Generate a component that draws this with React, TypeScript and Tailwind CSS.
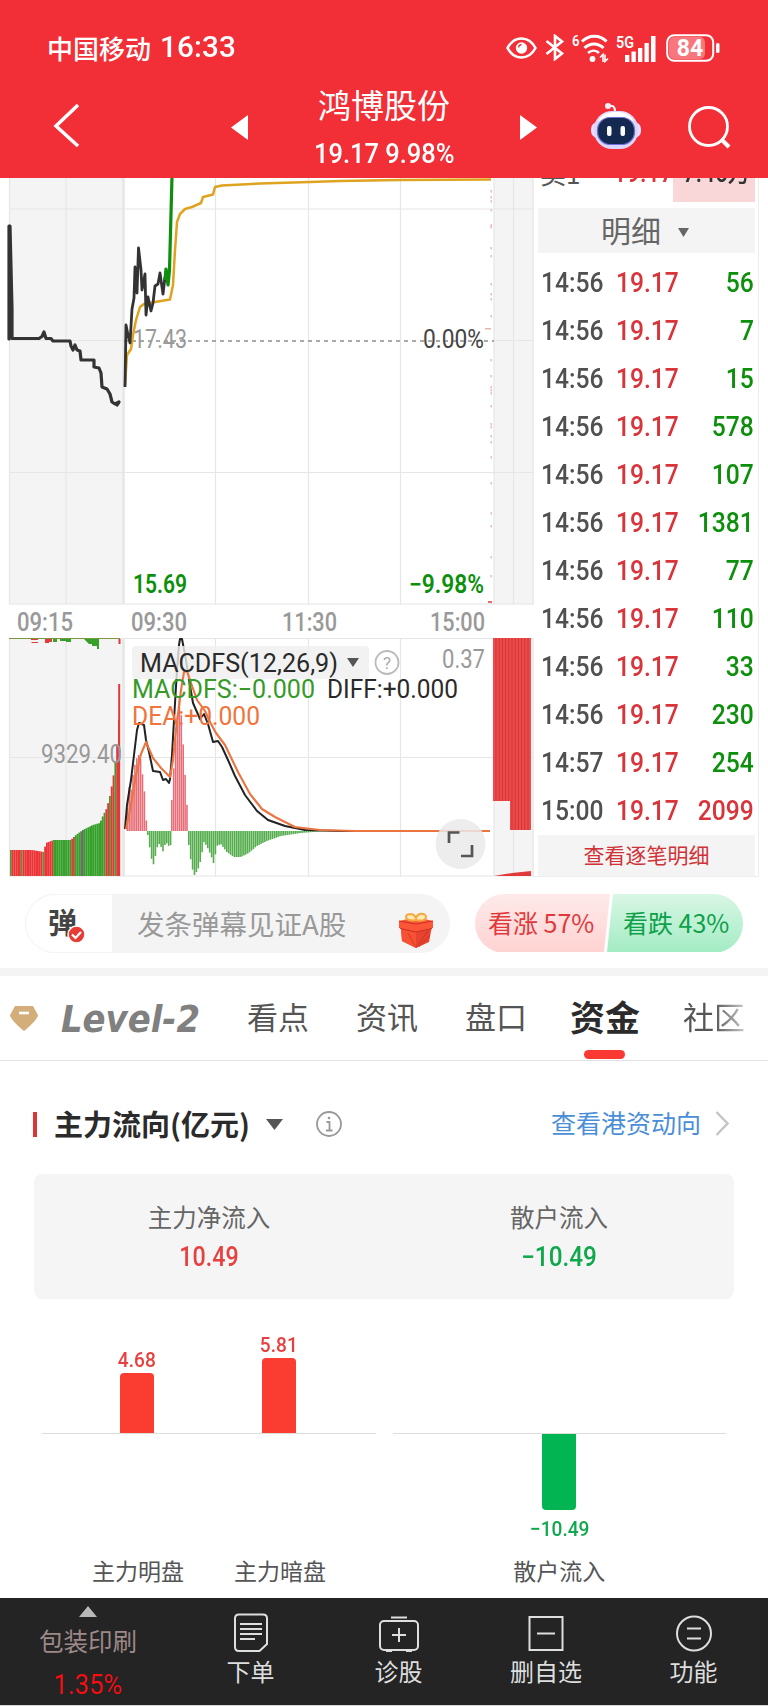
import type { ReactNode } from "react";

const FONT = "font-['Roboto','Noto_Sans_CJK_SC',sans-serif]";
const CJK = "font-['Noto_Sans_CJK_SC',sans-serif]";

type Pt = [number, number];
const line = (pts: Pt[]) => pts.map((p) => p.join(",")).join(" ");

function at(pts: Pt[], x: number) {
  for (let i = 1; i < pts.length; i++) {
    if (x <= pts[i][0]) {
      const [x0, y0] = pts[i - 1];
      const [x1, y1] = pts[i];
      return y0 + ((y1 - y0) * (x - x0)) / (x1 - x0);
    }
  }
  return pts[pts.length - 1][1];
}

function range(a: number, b: number, step: number) {
  const out: number[] = [];
  for (let v = a; v <= b; v += step) out.push(v);
  return out;
}

const auction: Pt[] = [[9, 226], [9, 339], [10, 226], [12, 309], [12, 338.5], [39, 338.5], [42, 336.5], [44, 332], [46, 338.5], [51, 338.5], [53, 341], [70, 341], [71, 346], [73, 350], [75, 345], [77, 350], [80, 351], [81, 360], [94, 360], [94, 367], [99, 368], [101, 373], [102, 387], [107, 389], [110, 394], [112, 402], [115, 404], [119, 402], [117, 405]];
const price: Pt[] = [[125, 387], [126, 325], [128, 335], [130, 343], [132, 309], [134, 298], [135, 267], [137, 293], [138.5, 248], [141, 270], [142, 290], [145, 274], [146, 315], [148, 297], [151, 311], [153, 303], [155, 286], [158, 284], [160, 273], [163, 294], [165, 277]];
const surge: Pt[] = [[165, 280], [166, 269], [168, 285], [169.5, 270], [172, 176]];
const avg: Pt[] = [[125, 385], [127, 355], [131, 349], [133, 335], [136, 320], [140, 307], [144, 304], [155, 302], [170, 299.5], [173, 285], [175, 250], [177, 222], [180, 214], [185, 209], [192, 207], [201, 203], [203, 197], [213, 194.5], [215, 187], [222, 185.5], [260, 183.5], [310, 182], [340, 181], [400, 180], [491, 179.5]];
const diff: Pt[] = [[125, 829], [127, 805], [131, 780], [134, 755], [137, 730], [139, 723], [144, 725], [146, 740], [149, 752], [153, 771], [160, 772], [163, 780], [166, 779], [169, 783], [170, 779], [172, 755], [174, 720], [177, 670], [179, 645], [180, 639], [182, 639], [186, 660], [189, 680], [193, 703], [200, 719], [204, 714], [208, 724], [213, 742], [218, 741], [222, 747], [228, 760], [235, 776], [245, 795], [257, 811], [268, 820], [285, 826], [305, 830], [340, 831], [490, 831]];
const dea: Pt[] = [[126, 829], [131, 805], [136, 775], [141, 754], [146, 742], [153, 758], [161, 768], [167, 774], [170, 777], [173, 760], [176, 730], [181, 690], [184, 672], [187, 671], [191, 683], [197, 700], [205, 711], [210, 722], [216, 733], [225, 745], [238, 772], [250, 794], [262, 809], [275, 817], [295, 827], [320, 830], [355, 831], [490, 831]];
const macdUp1: Pt[] = [[126, 815], [128, 786], [130, 792], [132, 776], [135, 760], [139, 753], [141, 768], [144, 795], [146, 829]];
const macdUp2: Pt[] = [[171, 800], [174, 750], [177, 712], [179, 695], [181, 722], [184, 770], [186, 802], [188, 830]];
const macdDown1: Pt[] = [[147, 835], [149, 848], [151, 860], [153, 865], [156, 848], [159, 843], [162, 852], [165, 842], [168, 846], [170, 845]];
const macdDown2: Pt[] = [[188, 845], [190, 860], [193, 876], [197, 870], [200, 860], [203, 842], [206, 846], [210, 855], [213, 864], [216, 846], [220, 844], [226, 852], [233, 857], [240, 857], [248, 853], [256, 846], [266, 841], [280, 836], [300, 833], [325, 831]];
const volume: Pt[] = [[10, 850], [20, 850], [31, 850], [43, 852], [45, 843], [53, 840], [70, 840], [75, 835], [82, 830], [92, 825], [99, 823], [102, 816], [106, 808], [109, 796], [112, 780], [115, 757], [117, 738], [118, 720], [119, 684]];

function volumeColor(x: number) {
  if (x < 11 || (x > 20 && x < 22) || (x > 42 && x < 44)) return "#6f8a35";
  if (x < 53) return "#ec3437";
  if (x > 71 && x < 73.5) return "#d8433a";
  if (x > 79 && x < 82) return "#5c7a55";
  if (x < 102) return "#35a02a";
  return Math.round(x / 1.8) % 3 === 1 ? "#4c9a2d" : "#e0393a";
}

const ticks = [190, 196, 200, 209, 224, 226, 247, 255, 283, 293, 298, 315, 359, 375, 386, 389, 392, 405, 423, 426, 435, 441, 456, 482, 512, 525, 556, 575, 601];

function Label(p: { x: number; y: number; w: number; fill: string; size?: number; weight?: number; children: ReactNode }) {
  return (
    <text x={p.x} y={p.y} textLength={p.w} lengthAdjust="spacingAndGlyphs" fill={p.fill} fontSize={p.size ?? 25.5} fontWeight={p.weight ?? 400}>
      {p.children}
    </text>
  );
}

function Chart() {
  return (
    <svg className="block shrink-0" width="534" height="702" viewBox="0 178 534 702">
      <rect x="9" y="178" width="115" height="426" fill="#f4f4f4" />
      <rect x="9" y="638" width="115" height="238" fill="#f4f4f4" />
      <rect x="494" y="178" width="40" height="426" fill="#f4f4f4" />
      <rect x="494" y="638" width="40" height="238" fill="#f4f4f4" />
      <g stroke="#e6e6e6" strokeWidth="1.2" fill="none">
        <path d="M9 209H534M9 340.5H124M494 340.5H534M9 472.5H534M9 604H534M9 638.500H534M9 757.500H534M9 876H534" />
        <path d="M9.500 178V604M66 178V604M215.500 178V604M308.500 178V604M400.500 178V604M494 178V604M513.500 178V604M533 178V604" />
        <path d="M9.500 638V876M66 638V876M215.500 638V876M308.500 638V876M400.500 638V876M494 638V876M513.500 638V876M533 638V876" />
        <path d="M123.500 178V604M123.500 638V876" strokeWidth="2.500" />
      </g>
      <path d="M124 341H494" stroke="#8d8d8d" strokeWidth="1.300" strokeDasharray="4 4" />
      <g fill="#e9b3b3">
        {ticks.map((y) => <rect key={y} x={490.500} y={y} width="1.300" height="2.500" />)}
        <rect x="485" y="328" width="6" height="1.500" />
        <rect x="488" y="601" width="4" height="2" fill="#ee6a6a" />
      </g>
      <polyline points={line(avg)} fill="none" stroke="#dfa31f" strokeWidth="2.500" strokeLinejoin="round" />
      <polyline points={line(auction)} fill="none" stroke="#333" strokeWidth="3.200" strokeLinejoin="round" strokeLinecap="round" />
      <polyline points={line(price)} fill="none" stroke="#333" strokeWidth="2.800" strokeLinejoin="round" />
      <polyline points={line(surge)} fill="none" stroke="#0d8f0d" strokeWidth="3.200" strokeLinejoin="round" />

      <Label x={133} y={347.5} w={54} fill="#999">17.43</Label>
      <Label x={423} y={347.5} w={61} fill="#444">0.00%</Label>
      <Label x={133} y={593} w={54} fill="#0c900c" weight={600}>15.69</Label>
      <Label x={409} y={593} w={75} fill="#0c900c" weight={600}>−9.98%</Label>
      <Label x={17} y={631} w={56} fill="#999" weight={500}>09:15</Label>
      <Label x={131} y={631} w={56} fill="#999" weight={500}>09:30</Label>
      <Label x={282} y={631} w={55} fill="#999" weight={500}>11:30</Label>
      <Label x={430} y={631} w={55} fill="#999" weight={500}>15:00</Label>

      {range(10, 119, 1.8).map((x) => (
        <rect key={x} x={x} y={at(volume, x)} width="1.850" height={876 - at(volume, x)} fill={volumeColor(x)} />
      ))}
      <path d="M119.200 684V876" stroke="#e0393a" strokeWidth="2" />
      <path d="M9 638.500H120" stroke="#78983f" strokeWidth="1.200" />
      <path d="M11 639h17l3 3h7v-2h-7v-1zM28 639h10v4h-6zM45 639h7v3h-3v1h-4zM118.500 639h2v5h-2z" fill="#e03a3a" />
      <path d="M53 639h4v3h-4zM60 639h11v3h-5v-1h-6zM84 639h15v10h-2v-3h-5v-2h-3z" fill="#35a02a" />

      <g fill="#e66770" opacity="0.950">
        {range(126.500, 146, 1.900).map((x) => <rect key={x} x={x} y={at(macdUp1, x)} width="1.600" height={831 - at(macdUp1, x)} />)}
        {range(171, 188, 1.900).map((x) => <rect key={x} x={x} y={at(macdUp2, x)} width="1.600" height={831 - at(macdUp2, x)} />)}
      </g>
      <g fill="#55ad4e">
        {range(147, 170, 1.900).map((x) => <rect key={x} x={x} y={831} width="1.600" height={at(macdDown1, x) - 831} />)}
        {range(188, 324, 1.900).map((x) => <rect key={x} x={x} y={831} width="1.600" height={at(macdDown2, x) - 831} />)}
      </g>

      <path d="M493 638H531V830H510V801H493z" fill="#ef4b4b" />
      <g stroke="#c93234" strokeWidth="0.900">
        {range(496, 509, 3.200).map((x) => <path key={x} d={`M${x} 638V801`} />)}
        {range(512, 531, 3.200).map((x) => <path key={x} d={`M${x} 638V830`} />)}
      </g>
      <path d="M494 876L512 873L531 871V876z" fill="#e03a3a" />

      <polyline points={line(diff)} fill="none" stroke="#222" strokeWidth="2" strokeLinejoin="round" />
      <rect x="132" y="646" width="237" height="33" rx="3" fill="#efefef" fillOpacity="0.800" />
      <polyline points={line(dea)} fill="none" stroke="#ec7440" strokeWidth="2.100" strokeLinejoin="round" />
      <Label x={140} y={672} w={198} fill="#2a2a2a">MACDFS(12,26,9)</Label>
      <path d="M347 658H359L353 667z" fill="#555" />
      <circle cx="387" cy="662.500" r="11.500" fill="none" stroke="#bbb" strokeWidth="1.800" />
      <text x="387" y="668.500" textAnchor="middle" fontSize="17" fill="#aaa">?</text>
      <Label x={442} y={668} w={43} fill="#999">0.37</Label>
      <Label x={132} y={698} w={183} fill="#359a28">MACDFS:−0.000</Label>
      <Label x={327} y={698} w={131} fill="#2a2a2a">DIFF:+0.000</Label>
      <Label x={132} y={725} w={128} fill="#f0743c">DEA:+0.000</Label>
      <Label x={41} y={763} w={81} fill="#999">9329.40</Label>
      <circle cx="460.500" cy="844" r="25" fill="#eaeaea" fillOpacity="0.850" />
      <path d="M449 843V832.500H459.500M472 845V856H461" fill="none" stroke="#555" strokeWidth="2.700" />
    </svg>
  );
}

function Eye() {
  return (
    <svg width="31" height="22" viewBox="0 0 31 22" fill="none">
      <path d="M1.500 11C5 4.500 10 1.500 15.500 1.500S26 4.500 29.500 11C26 17.500 21 20.500 15.500 20.500S5 17.500 1.500 11z" stroke="#fff" strokeWidth="2.600" />
      <circle cx="15.500" cy="11" r="5.700" fill="#fff" />
      <path d="M12.500 10.500a3.500 3.500 0 0 1 3-3" stroke="#f22f37" strokeWidth="1.300" />
    </svg>
  );
}

function Robot() {
  return (
    <svg width="52" height="48" viewBox="0 0 52 48">
      <path d="M18 4C22 3 25 4 25 9" fill="none" stroke="#fff" strokeWidth="2" />
      <circle cx="18" cy="4" r="3" fill="#f7eefc" />
      <rect x="1" y="20" width="50" height="16" rx="7" fill="#e6defb" />
      <rect x="4" y="9" width="44" height="38" rx="18" fill="#dcd6fa" />
      <path d="M8 20C11 12 18 10 26 10S41 12 44 20C36 13 16 13 8 20z" fill="#fff" />
      <rect x="7.500" y="15.500" width="37" height="27" rx="12.500" fill="#14294f" stroke="#6f70d8" strokeWidth="1.200" />
      <rect x="17" y="24" width="4.500" height="10" rx="2" fill="#fff" />
      <rect x="30.500" y="24" width="4.500" height="10" rx="2" fill="#fff" />
    </svg>
  );
}

function Header() {
  return (
    <header className="h-[178px] shrink-0 overflow-hidden bg-[#f22f37] text-white">
      <div className="flex h-[92px] items-center pt-[3px] pr-[48px] pl-[47px]">
        <span className={`${CJK} text-[26px] leading-none font-medium`}>中国移动</span>
        <span className="ml-[9px] w-[77px] origin-left scale-x-[1.02] text-[29px] leading-none font-medium tracking-[0.2px]">16:33</span>
        <div className="ml-auto flex items-center">
          <Eye />
          <svg className="ml-[8px]" width="20" height="27" viewBox="0 0 20 27" fill="none" stroke="#fff" strokeWidth="2.600">
            <path d="M1.500 7L17 19.500L10 25V2L17 7.500L1.500 20" />
          </svg>
          <svg className="ml-[7px]" width="37" height="30" viewBox="0 0 37 30" fill="none" stroke="#fff">
            <text x="0" y="12.500" fontSize="15" fontWeight="600" fill="#fff" stroke="none" textLength="7.500" lengthAdjust="spacingAndGlyphs">6</text>
            <path d="M10 8.500C17 1.500 28 1.500 34.500 8.500" strokeWidth="3" />
            <path d="M12.500 15C18 9.500 26 9.500 31.500 15" strokeWidth="3" />
            <path d="M16 20C19.500 17 24 17 27 20" strokeWidth="2.600" />
            <circle cx="20.500" cy="26" r="2.900" fill="#fff" stroke="none" />
            <path d="M28 24.500L31 21.500V29M33 21.500V28.500L36 25.500" strokeWidth="1.600" />
          </svg>
          <svg className="ml-[7px]" width="41" height="30" viewBox="0 0 41 30" fill="#fff">
            <text x="0" y="14.500" fontSize="17" fontWeight="600" textLength="18" lengthAdjust="spacingAndGlyphs">5G</text>
            <path d="M9 22h4.300v7H9zM15.500 18.500h4.300V29h-4.300zM22 15h4.300v14H22zM28.500 10h4.300v19h-4.300zM35 3h4.500v26H35z" />
          </svg>
          <svg className="ml-[9px]" width="54" height="28" viewBox="0 0 54 28">
            <rect x="1.200" y="1.200" width="46" height="25.600" rx="7" fill="none" stroke="#fff" strokeWidth="2" />
            <rect x="3" y="3" width="36" height="22" rx="5" fill="#f9777c" />
            <rect x="50" y="9" width="3.500" height="10" rx="1.500" fill="#fff" />
            <text x="24" y="22" textAnchor="middle" fontSize="23" fontWeight="700" fill="#fff">84</text>
          </svg>
        </div>
      </div>
      <div className="grid grid-cols-[70px_170px_288px_240px]">
        <svg className="mt-[10px] ml-[52px]" width="28" height="46" viewBox="0 0 28 46" fill="none" stroke="#fff" strokeWidth="3.500">
          <path d="M26 3L4 24L26 44" />
        </svg>
        <svg className="mt-[23px] ml-[161px]" width="17" height="25" viewBox="0 0 17 25" fill="#fff"><path d="M17 0V25L0 12.500z" /></svg>
        <div className="flex flex-col items-center">
          <h1 className={`${CJK} mt-[-6px] text-[33px] leading-[36px]`}>鸿博股份</h1>
          <span className="mt-[15px] scale-x-[0.91] text-[28px] leading-[34px] font-medium whitespace-nowrap">19.17 9.98%</span>
        </div>
        <div className="flex items-start">
          <svg className="mt-[23px] ml-[-8px]" width="17" height="25" viewBox="0 0 17 25" fill="#fff"><path d="M0 0V25L17 12.500z" /></svg>
          <div className="mt-[10px] ml-[53px]"><Robot /></div>
          <svg className="mt-[13px] ml-[45px]" width="46" height="46" viewBox="0 0 46 46" fill="none" stroke="#fff" strokeWidth="2.800">
            <circle cx="21.500" cy="21.500" r="19" />
            <path d="M34 34L42 42" strokeWidth="4" />
          </svg>
        </div>
      </div>
    </header>
  );
}

type Trade = { time: string; price: string; lots: string; up?: boolean };
const last = "19.17";
const trades: Trade[] = [
  { time: "14:56", price: last, lots: "56" },
  { time: "14:56", price: last, lots: "7" },
  { time: "14:56", price: last, lots: "15" },
  { time: "14:56", price: last, lots: "578" },
  { time: "14:56", price: last, lots: "107" },
  { time: "14:56", price: last, lots: "1381" },
  { time: "14:56", price: last, lots: "77" },
  { time: "14:56", price: last, lots: "110" },
  { time: "14:56", price: last, lots: "33" },
  { time: "14:56", price: last, lots: "230" },
  { time: "14:57", price: last, lots: "254" },
  { time: "15:00", price: last, lots: "2099", up: true },
];

function Trades() {
  return (
    <aside className="flex h-[699px] w-[225px] flex-col overflow-hidden border-r border-b border-[#ededed] pl-[4px]">
      <div className="flex h-[24px] shrink-0 items-end overflow-hidden text-[27px] leading-none font-medium whitespace-nowrap">
        <span className={`${CJK} mb-[16px] w-[75px] shrink-0 pl-[2px] text-[26px] font-normal text-[#555]`}>卖1</span>
        <span className="mb-[15px] w-[60px] shrink-0 origin-left scale-x-[0.88] text-[#dc3439]">19.17</span>
        <span className="flex h-[24px] w-[82px] shrink-0 items-end justify-end bg-[#f9d7d8] pr-[4px] pb-[15px] text-[#333]">
          <span className="origin-right scale-x-[0.84]">7.46万</span>
        </span>
      </div>
      <div className="mt-[6px] flex h-[45px] w-[217px] shrink-0 items-center bg-[#f4f4f4] pl-[63px]">
        <span className={`${CJK} mt-[-3px] text-[30px] leading-none text-[#666]`}>明细</span>
        <svg className="mt-[3px] ml-[17px]" width="11" height="9" viewBox="0 0 11 9" fill="#666"><path d="M0 0H11L5.500 9z" /></svg>
      </div>
      <div className="mt-[6px] flex flex-col">
        {trades.map((t, i) => (
          <div key={i} className="flex h-[48px] w-[217px] items-center text-[28px] font-medium">
            <span className="ml-[3px] w-[75px] origin-left scale-x-[0.88] text-[#505050]">{t.time}</span>
            <span className="w-[70px] origin-left scale-x-[0.88] text-[#d9343a]">{t.price}</span>
            <span className={`mr-[1px] ml-auto origin-right scale-x-[0.88] ${t.up ? "text-[#d9343a]" : "text-[#0c900c]"}`}>{t.lots}</span>
          </div>
        ))}
      </div>
      <div className={`${CJK} flex h-[41px] w-[217px] items-center justify-center bg-[#f4f4f4] pb-[2px] text-[21px] text-[#d03337]`}>查看逐笔明细</div>
    </aside>
  );
}

function Gift() {
  return (
    <svg width="36" height="38" viewBox="0 0 36 38">
      <path d="M3 16L18 20L34 15L31 31L18 37L4 30z" fill="#e8432f" />
      <path d="M1 10L18 6L35 10V17L18 21L1 17z" fill="#fb5638" />
      <path d="M18 21V37L4 30L3 18z" fill="#f85032" />
      <path d="M1 10L18 13L35 10M2 17.500L18 21L34 17.500" fill="none" stroke="#cf2f24" strokeWidth="1" />
      <path d="M18 37L30 20M21 36L32 24M17 35L10 22" stroke="#bf2b20" strokeWidth="1" opacity="0.600" />
      <path d="M18 9C13 10 8 9 8 6S15 1 18 7C20 1 28 2 28 6S23 10 18 9z" fill="#fde9b4" stroke="#f5a93c" strokeWidth="2" />
    </svg>
  );
}

function Danmaku() {
  return (
    <section className="flex h-[91px] shrink-0 pt-[17px] pl-[25px]">
      <div className="flex h-[59px] w-[425px] overflow-hidden rounded-full bg-[#f4f4f4]">
        <div className="flex w-[87px] items-center rounded-l-full border border-r-0 border-[#f4f4f4] bg-white pl-[22px]">
          <div className="relative mt-[-6px]">
            <span className={`${CJK} block text-[29px] leading-[34px] font-bold text-[#444]`}>弹</span>
            <svg className="absolute top-[21px] left-[19px]" width="19" height="19" viewBox="0 0 19 19">
              <circle cx="9.500" cy="9.500" r="8.500" fill="#e83b36" stroke="#fff" strokeWidth="1.500" />
              <path d="M5 9.500L8.500 13L14 7" fill="none" stroke="#fff" strokeWidth="2.200" />
            </svg>
          </div>
        </div>
        <span className={`${CJK} ml-[25px] self-center text-[27.500px] leading-none whitespace-nowrap text-[#999]`}>发条弹幕见证A股</span>
        <div className="mt-[17px] mr-[16px] ml-auto"><Gift /></div>
      </div>
      <div className={`${CJK} ml-[25px] flex h-[59px] w-[268px] overflow-hidden rounded-full pb-px text-[25px]`}>
        <div className="flex w-[135px] items-center bg-linear-to-b from-[#fdeaea] to-[#ffd3d2] pl-[13px] text-[#e0393c] [clip-path:polygon(0_0,100%_0,calc(100%_-_6px)_100%,0_100%)]">
          <span className="origin-left whitespace-nowrap">看涨 57%</span>
        </div>
        <div className="ml-[-3px] flex flex-1 items-center bg-linear-to-b from-[#d8f6e5] to-[#a3ecc4] pl-[16px] text-[#0fa04b] [clip-path:polygon(6px_0,100%_0,100%_100%,0_100%)]">
          <span className="origin-left whitespace-nowrap">看跌 43%</span>
        </div>
      </div>
    </section>
  );
}

function Tabs() {
  return (
    <nav className={`${CJK} flex h-[85px] shrink-0 items-center border-b border-[#e2e2e2] pl-[10px] text-[31px] text-[#555]`}>
      <svg width="28" height="25" viewBox="0 0 28 25">
        <path d="M5 0H23L28 9C28 13 18 22 14 25C10 22 0 13 0 9z" fill="#d3ae7a" />
        <path d="M9 7H19" stroke="#fff" strokeWidth="2.600" />
      </svg>
      <svg className="ml-[22px]" width="142" height="38" viewBox="0 0 142 38">
        <text x="1" y="33" className="font-['DejaVu_Sans',sans-serif]" fontSize="38" fontWeight="700" fontStyle="italic" fill="#808080" textLength="139" lengthAdjust="spacingAndGlyphs">Level-2</text>
      </svg>
      <span className="mt-[-3px] ml-[45px] w-[109px]">看点</span>
      <span className="mt-[-3px] w-[109px]">资讯</span>
      <span className="mt-[-3px] w-[105px]">盘口</span>
      <div className="relative mt-[-3px] w-[113px]">
        <span className="text-[35px] font-bold text-[#2b2b2b]">资金</span>
        <i className="absolute top-[60px] left-[14px] h-[9px] w-[41px] rounded-full bg-[#fa3a32]" />
      </div>
      <span className="mt-[-3px] w-[62px] bg-linear-to-r from-[#555] from-50% to-[#ccc] bg-clip-text whitespace-nowrap text-transparent">社区</span>
    </nav>
  );
}

function Flow() {
  return (
    <main className={CJK}>
      <div className="flex h-[113px] items-center pt-[13px] pr-[39px] pl-[33px]">
        <i className="h-[25px] w-[4px] bg-[#dd3438]" />
        <h2 className="mt-[-1px] ml-[17px] w-[197px] text-[29px] font-bold whitespace-nowrap text-[#2b2b2b]">主力流向(亿元)</h2>
        <svg className="ml-[15px]" width="17" height="11" viewBox="0 0 17 11" fill="#555"><path d="M0 0H17L8.500 11z" /></svg>
        <svg className="ml-[33px]" width="26" height="26" viewBox="0 0 26 26" fill="none" stroke="#999" strokeWidth="1.800">
          <circle cx="13" cy="13" r="12" />
          <path d="M10.500 11H13.500V19M10 19.500H16.500" />
          <circle cx="13" cy="7" r="1.300" fill="#999" stroke="none" />
        </svg>
        <span className="mt-[-2px] ml-auto text-[25px] text-[#4a8ed8]">查看港资动向</span>
        <svg className="mt-[-1px] ml-[14px]" width="14" height="25" viewBox="0 0 14 25" fill="none" stroke="#c4c4c4" strokeWidth="2.400"><path d="M1.500 1L12.500 12.500L1.500 24" /></svg>
      </div>
      <div className="mx-[34px] grid h-[125px] grid-cols-2 rounded-[8px] bg-[#f5f5f5] pt-[27px] text-center">
        <div>
          <div className="text-[24.500px] leading-[32px] text-[#666]">主力净流入</div>
          <div className="mt-[7px] scale-x-[0.86] font-['Roboto'] text-[27px] leading-[34px] font-medium text-[#e8403e]">10.49</div>
        </div>
        <div>
          <div className="text-[24.500px] leading-[32px] text-[#666]">散户流入</div>
          <div className="mt-[7px] scale-x-[0.9] font-['Roboto'] text-[27px] leading-[34px] font-medium text-[#10a84d]">−10.49</div>
        </div>
      </div>
      <div className="grid grid-cols-2 gap-[17px] pr-[42px] pl-[42px]">
        <div>
          <div className="flex h-[135px] items-end gap-[62px] border-b border-[#dedede] pl-[55px] font-['Roboto'] text-[21px] leading-[26px] font-medium text-[#e8403e]">
            <div className="flex w-[80px] flex-col items-center">
              <span className="scale-x-[0.91]">4.68</span>
              <i className="h-[60px] w-[34px] rounded-t-[4px] bg-[#fb3c31]" />
            </div>
            <div className="flex w-[80px] flex-col items-center">
              <span className="scale-x-[0.91]">5.81</span>
              <i className="h-[75px] w-[34px] rounded-t-[4px] bg-[#fb3c31]" />
            </div>
          </div>
          <div className="mt-[119px] flex gap-[50px] pl-[50px] text-[23px] leading-[34px] whitespace-nowrap text-[#555]">
            <span className="w-[92px]">主力明盘</span>
            <span className="w-[92px]">主力暗盘</span>
          </div>
        </div>
        <div>
          <div className="h-[135px] border-b border-[#dedede]" />
          <div className="flex h-[119px] flex-col items-center">
            <i className="h-[76px] w-[34px] rounded-b-[4px] bg-[#03b552]" />
            <span className="mt-[6px] scale-x-[0.91] font-['Roboto'] text-[21px] leading-[26px] font-medium text-[#10a84d]">−10.49</span>
          </div>
          <div className="text-center text-[23px] leading-[34px] text-[#555]">散户流入</div>
        </div>
      </div>
    </main>
  );
}

function NavItem({ label, width, children }: { label: string; width: string; children: ReactNode }) {
  return (
    <div className={`flex flex-col items-center ${width}`}>
      <svg className="mt-[15px]" width="42" height="40" viewBox="0 0 42 40" fill="none" stroke="#dedede" strokeWidth="2">{children}</svg>
      <span className="mt-[1px] leading-[34px]">{label}</span>
    </div>
  );
}

function BottomBar() {
  return (
    <footer className={`${CJK} mt-auto flex h-[108px] shrink-0 border-b border-[#d8d8d8] bg-[#242424] text-[24px] text-[#dedede]`}>
      <div className="flex w-[176px] flex-col items-center">
        <svg className="mt-[8px]" width="18" height="11" viewBox="0 0 18 11" fill="#b8b8b8"><path d="M9 0L18 11H0z" /></svg>
        <span className="mt-[7px] text-[24.500px] leading-[34px] text-[#9d8989]">包装印刷</span>
        <span className="mt-[10px] scale-x-[0.95] font-['Roboto'] text-[27px] leading-[34px] text-[#fb0e12]">1.35%</span>
      </div>
      <NavItem label="下单" width="w-[149px]">
        <path d="M9 1.500H33Q37 1.500 37 5.500V31L29.500 38H9Q5 38 5 34V5.500Q5 1.500 9 1.500z" />
        <path d="M10 11H32M10 16H32M10 21H32M10 26H25" />
      </NavItem>
      <NavItem label="诊股" width="w-[147px]">
        <rect x="2" y="8" width="38" height="29" rx="4" />
        <path d="M13 4.500H29M8 38H14M28 38H34M21 15V29M14 22H28" />
      </NavItem>
      <NavItem label="删自选" width="w-[148px]">
        <rect x="4.500" y="4" width="33" height="33" />
        <path d="M12 20.500H30" />
      </NavItem>
      <NavItem label="功能" width="w-[147px]">
        <circle cx="21" cy="20.500" r="17" />
        <path d="M14 15.500H28M14 25.500H28" />
      </NavItem>
    </footer>
  );
}

export default function App() {
  return (
    <div className={`${FONT} flex h-[1706px] w-[768px] flex-col overflow-hidden bg-white`}>
      <Header />
      <div className="flex h-[699px] shrink-0 overflow-hidden">
        <Chart />
        <Trades />
      </div>
      <Danmaku />
      <div className="h-[8px] shrink-0 bg-[#f4f4f4]" />
      <Tabs />
      <Flow />
      <BottomBar />
    </div>
  );
}
